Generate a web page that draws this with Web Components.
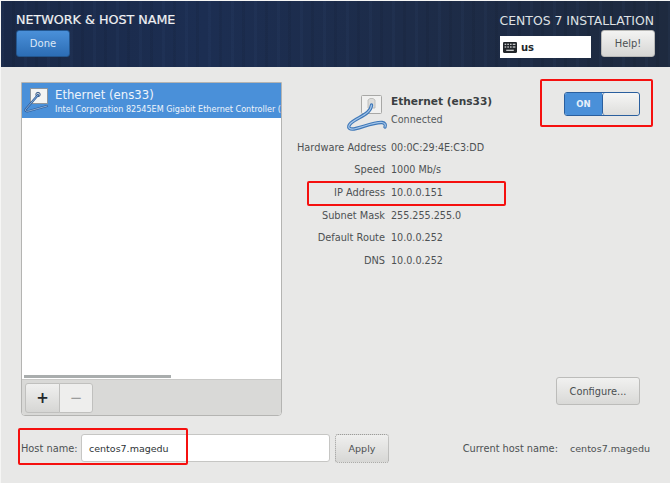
<!DOCTYPE html>
<html>
<head>
<meta charset="utf-8">
<title>Network &amp; Host Name</title>
<style>
  html, body { margin: 0; height: 100%; background: #e8e8e7; }
  body { font-family: "DejaVu Sans", sans-serif; color: #2e3436; overflow: hidden; }
</style>
</head>
<body>
<install-page>
  <install-header slot="header" title="NETWORK &amp; HOST NAME" product="CENTOS 7 INSTALLATION" layout="us"></install-header>
  <device-list slot="list" name="Ethernet (ens33)" description="Intel Corporation 82545EM Gigabit Ethernet Controller ("></device-list>
  <device-details slot="details" name="Ethernet (ens33)" status="Connected">
    <detail-row label="Hardware Address" value="00:0C:29:4E:C3:DD"></detail-row>
    <detail-row label="Speed" value="1000 Mb/s"></detail-row>
    <detail-row label="IP Address" value="10.0.0.151"></detail-row>
    <detail-row label="Subnet Mask" value="255.255.255.0"></detail-row>
    <detail-row label="Default Route" value="10.0.0.252"></detail-row>
    <detail-row label="DNS" value="10.0.0.252"></detail-row>
  </device-details>
  <host-row slot="host" hostname="centos7.magedu"></host-row>
  <red-mark slot="marks" style="left:540px;top:79px;width:113px;height:48px"></red-mark>
  <red-mark slot="marks" style="left:307px;top:181px;width:199px;height:25px"></red-mark>
  <red-mark slot="marks" style="left:18px;top:428px;width:170px;height:37px"></red-mark>
</install-page>

<script>
// large cable icon for the details panel
const cablePath = "M25.5 10 C25 19 12 22 5 28 C0 33 4 35 10 33.5 C18 31.5 29 27 36 27.5 C39 28 40 30 39 32";
const detailsIcon = `
  <svg width="44" height="38" viewBox="0 0 44 38" style="flex:none;display:block" aria-hidden="true">
    <rect x="15.5" y="0.5" width="20" height="18" rx="1" fill="#f1f1f0" stroke="#a8a8a6"/>
    <path d="M22 5 l2 -1.5 h3 l2 1.5 v8 h-7 z" fill="#dcdcda" stroke="#b5b5b3" stroke-width="0.8"/>
    <path d="${cablePath}" fill="none" stroke="#3f78b8" stroke-width="3.4" stroke-linecap="round"/>
    <path d="${cablePath}" fill="none" stroke="#a5c6ea" stroke-width="1.2" stroke-linecap="round"/>
  </svg>`;

// small one for the list row, its plate is wider and the cable thinner
const rowIcon = `
  <svg width="26" height="25" viewBox="0 0 26 25" style="flex:none;display:block" aria-hidden="true">
    <rect x="6.5" y="0.5" width="17" height="15" fill="#f4f4f3" stroke="#8e959c"/>
    <circle cx="14" cy="6.5" r="2.2" fill="#c9ced4" stroke="#3f5f8c" stroke-width="1"/>
    <path d="M14 7 L1.5 21.5 C1 23.5 3 23.5 5 23 L23 18" fill="none" stroke="#2f5f9c" stroke-width="2.2" stroke-linecap="round" stroke-linejoin="round"/>
    <path d="M14 7 L1.5 21.5 C1 23.5 3 23.5 5 23 L23 18" fill="none" stroke="#9dbde2" stroke-width="0.8" stroke-linecap="round" stroke-linejoin="round"/>
  </svg>`;

class InstallPage extends HTMLElement {
  constructor() {
    super();
    this.attachShadow({ mode: "open" });
    this.shadowRoot.innerHTML = `
      <style>
        :host { display: block; position: relative; width: 670px; height: 483px; }
        .frame { display: flex; flex-direction: column; height: 100%; box-sizing: border-box; padding: 1px 0 0 1px; background: #f6f6f5; }
        .body { flex: 1; background: #e8e8e7; display: grid; grid-template-columns: 261px 1fr; grid-template-rows: 334px auto; padding: 15px 20px 0 20px; column-gap: 15px; }
        .host { grid-column: 1 / -1; }
      </style>
      <div class="frame">
        <slot name="header"></slot>
        <div class="body">
          <slot name="list"></slot>
          <slot name="details"></slot>
          <div class="host"><slot name="host"></slot></div>
        </div>
      </div>
      <slot name="marks"></slot>
    `;
  }
}

class InstallHeader extends HTMLElement {
  constructor() {
    super();
    this.attachShadow({ mode: "open" });
  }
  connectedCallback() {
    this.shadowRoot.innerHTML = `
      <style>
        :host { display: flex; justify-content: space-between; height: 66px; box-sizing: border-box; padding: 12px 15px 0 15px; color: #f0f1f3;
          background:
            repeating-linear-gradient(90deg, rgba(70,100,150,.07) 0 3px, transparent 3px 11px, rgba(0,0,0,.06) 11px 14px, transparent 14px 23px),
            linear-gradient(90deg, #1a2947 0%, #1c2e52 30%, #1d2c49 60%, #1e2a3f 100%); }
        .title { font-size: 12.7px; line-height: 14px; font-weight: 500; -webkit-text-stroke: 0.2px #f0f1f3; }
        .done { display: flex; align-items: center; justify-content: center; width: 54px; height: 27px; margin-top: 3px; box-sizing: border-box; font-size: 10px; color: #dce8f6; border: 1px solid #23568f; border-radius: 3px; background: linear-gradient(#4a90d9, #2c6db5); }
        .right { display: flex; flex-direction: column; align-items: flex-end; }
        .product { font-size: 12.4px; line-height: 16px; margin-right: 1px; color: #dfe1e4; }
        .tools { display: flex; gap: 10px; margin-top: 1px; }
        .layout { display: flex; align-items: center; gap: 4px; width: 91px; height: 22px; margin-top: 6px; padding-left: 3px; box-sizing: border-box; background: #fff; color: #22262a; font-size: 10px; font-weight: 700; }
        .help { display: flex; align-items: center; justify-content: center; width: 54px; height: 27px; box-sizing: border-box; font-size: 9.9px; color: #4c5052; border: 1px solid #b8b8b6; border-radius: 3px; background: linear-gradient(#f3f3f2, #d6d6d4); }
      </style>
      <div>
        <div class="title">${this.getAttribute("title")}</div>
        <div class="done">Done</div>
      </div>
      <div class="right">
        <div class="product">${this.getAttribute("product")}</div>
        <div class="tools">
          <div class="layout">
            <svg width="14" height="11" viewBox="0 0 13 10" aria-hidden="true">
              <rect width="13" height="10" rx="1" fill="#22262a"/>
              <path d="M1.5 2h1.5M4 2h1.5M6.5 2h1.5M9 2h2.5M1.5 4.5h1.5M4 4.5h1.5M6.5 4.5h1.5M9 4.5h2.5M3 7.5h7" stroke="#fff" stroke-width="1"/>
            </svg>
            <span>${this.getAttribute("layout")}</span>
          </div>
          <div class="help">Help!</div>
        </div>
      </div>
    `;
  }
}

class DeviceList extends HTMLElement {
  constructor() {
    super();
    this.attachShadow({ mode: "open" });
  }
  connectedCallback() {
    this.shadowRoot.innerHTML = `
      <style>
        :host { display: flex; flex-direction: column; height: 334px; box-sizing: border-box; border: 1px solid #b4b4b2; border-radius: 0 0 4px 4px; background: #fff; overflow: hidden; }
        .row { display: flex; align-items: center; gap: 5px; height: 35px; padding-left: 2px; background: #4a90d9; color: #eef4fb; white-space: nowrap; overflow: hidden; }
        .text { padding-top: 1px; }
        .name { font-size: 11.7px; line-height: 15px; }
        .desc { font-size: 8.1px; line-height: 11px; margin-top: 1px; }
        .scroller { flex: 1; position: relative; }
        .thumb { position: absolute; left: 2px; bottom: 1px; width: 147px; height: 3px; background: #a9adad; }
        .bar { display: flex; height: 36px; box-sizing: border-box; padding: 3px 0 0 3px; background: #d9d9d7; border-top: 1px solid #c9c9c7; }
        .btn { display: flex; align-items: center; justify-content: center; width: 35px; height: 30px; box-sizing: border-box; border: 1px solid #c0c0be; }
        .add { border-radius: 3px 0 0 3px; background: linear-gradient(#f0f0ef, #d6d6d4); color: #23282b; font-size: 15px; font-weight: 700; }
        .remove { width: 34px; margin-left: -1px; border-radius: 0 3px 3px 0; background: #eeeeed; color: #9a9c9c; font-size: 15px; }
      </style>
      <div class="row">
        ${rowIcon}
        <div class="text">
          <div class="name">${this.getAttribute("name")}</div>
          <div class="desc">${this.getAttribute("description")}</div>
        </div>
      </div>
      <div class="scroller"><div class="thumb"></div></div>
      <div class="bar">
        <div class="btn add">+</div>
        <div class="btn remove">−</div>
      </div>
    `;
  }
}

class DeviceDetails extends HTMLElement {
  constructor() {
    super();
    this.attachShadow({ mode: "open" });
  }
  connectedCallback() {
    this.shadowRoot.innerHTML = `
      <style>
        :host { display: block; position: relative; }
        .head { display: flex; height: 54px; padding-left: 49px; }
        .icon { margin-top: 13px; }
        .head-text { margin: 12px 0 0 1px; }
        .name { font-size: 10.6px; line-height: 14px; font-weight: 700; color: #3a3f42; }
        .status { font-size: 9.6px; line-height: 14px; margin-top: 5px; color: #555a5c; }
        .rows { display: flex; flex-direction: column; }
        .switch { position: absolute; left: 267px; top: 10px; display: flex; width: 76px; height: 24px; box-sizing: border-box; border: 1px solid #2a5f9e; border-radius: 3px; overflow: hidden; }
        .on { display: flex; align-items: center; justify-content: center; width: 37px; background: #4a90d9; color: #e6f0fa; font-size: 8.5px; font-weight: 700; }
        .off { flex: 1; background: linear-gradient(#f6f6f5, #dededc); border-left: 1px solid #2a5f9e; border-radius: 3px; }
        .configure { position: absolute; left: 259px; top: 295px; display: flex; align-items: center; justify-content: center; width: 84px; height: 28px; box-sizing: border-box; font-size: 9.8px; color: #4a4e50; border: 1px solid #bcbcba; border-radius: 3px; background: linear-gradient(#f1f1f0, #d9d9d7); }
      </style>
      <div class="head">
        <div class="icon">${detailsIcon}</div>
        <div class="head-text">
          <div class="name">${this.getAttribute("name")}</div>
          <div class="status">${this.getAttribute("status")}</div>
        </div>
      </div>
      <div class="rows"><slot></slot></div>
      <div class="switch"><div class="on">ON</div><div class="off"></div></div>
      <div class="configure">Configure...</div>
    `;
  }
}

class DetailRow extends HTMLElement {
  constructor() {
    super();
    this.attachShadow({ mode: "open" });
  }
  connectedCallback() {
    this.shadowRoot.innerHTML = `
      <style>
        :host { display: grid; grid-template-columns: 88px 1fr; column-gap: 6px; height: 22.6px; align-items: center; font-size: 9.8px; color: #4d5153; white-space: nowrap; }
        .label { text-align: right; }
        .value { font-size: 9.6px; }
      </style>
      <div class="label">${this.getAttribute("label")}</div>
      <div class="value">${this.getAttribute("value")}</div>
    `;
  }
}

class HostRow extends HTMLElement {
  constructor() {
    super();
    this.attachShadow({ mode: "open" });
  }
  connectedCallback() {
    const hostname = this.getAttribute("hostname");
    this.shadowRoot.innerHTML = `
      <style>
        :host { display: flex; align-items: center; height: 30px; margin-top: 17px; font-size: 9.8px; color: #4d5153; white-space: nowrap; }
        .label { width: 56px; }
        .entry { display: flex; align-items: center; width: 249px; height: 28px; margin-left: 4px; padding-left: 7px; box-sizing: border-box; background: #fff; border: 1px solid #c6c6c4; border-radius: 3px; color: #2e3436; font-size: 9.5px; }
        .apply { display: flex; align-items: center; justify-content: center; width: 54px; height: 29px; margin-left: 5px; box-sizing: border-box; border: 1px dotted #9c9c9a; border-radius: 3px; font-size: 9.5px; background: linear-gradient(#efefee, #d7d7d5); }
        .current { margin-left: auto; display: flex; gap: 12px; }
        .current span + span { font-size: 9.55px; }
      </style>
      <span class="label">Host name:</span>
      <div class="entry">${hostname}</div>
      <div class="apply">Apply</div>
      <div class="current"><span>Current host name:</span><span>${hostname}</span></div>
    `;
  }
}

class RedMark extends HTMLElement {
  constructor() {
    super();
    this.attachShadow({ mode: "open" });
    this.shadowRoot.innerHTML = `
      <style>
        :host { position: absolute; box-sizing: border-box; border: 2px solid #f5100f; border-radius: 2px; }
      </style>
    `;
  }
}

customElements.define("install-page", InstallPage);
customElements.define("install-header", InstallHeader);
customElements.define("device-list", DeviceList);
customElements.define("device-details", DeviceDetails);
customElements.define("detail-row", DetailRow);
customElements.define("host-row", HostRow);
customElements.define("red-mark", RedMark);
</script>
</body>
</html>
